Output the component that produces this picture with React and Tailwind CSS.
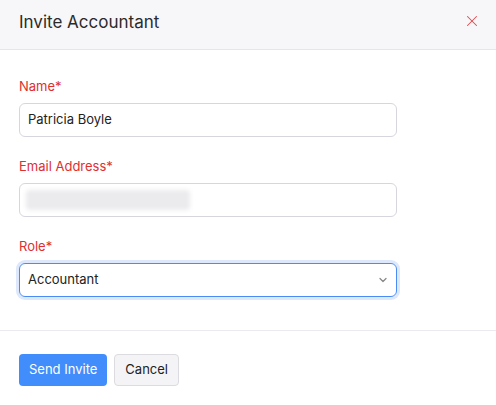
import { ChevronDown, X } from "lucide-react";

function Field({ label, children }) {
  return (
    <div className="flex flex-col">
      <label className="text-[13px] text-[#e02f2f] leading-5 mb-[7px]">{label}*</label>
      {children}
    </div>
  );
}

export default function App() {
  return (
    <div className="w-[496px] h-[405px] bg-white font-['Inter',sans-serif] text-[#222]">
      <div className="h-[50px] bg-[#f7f7f9] border-b border-[#e6e6ea] flex items-center justify-between pl-[19px] pr-[15px]">
        <h2 className="text-[17px] text-[#2b2b2b] -mt-[3px]">Invite Accountant</h2>
        <X className="w-[18px] h-[18px] text-[#e5484d] -mt-[7px]" strokeWidth={1.4} />
      </div>

      <div className="px-[19px] pt-[26px] pb-[33px] flex flex-col gap-[19px] w-[378px] box-content">
        <Field label="Name">
          <div className="h-[34px] border border-[#d6d6de] rounded-md px-[8px] flex items-center text-[13px]">
            Patricia Boyle
          </div>
        </Field>
        <Field label="Email Address">
          <div className="h-[34px] border border-[#d6d6de] rounded-md px-[6px] flex items-center">
            <div className="h-[20px] w-[164px] bg-[#ebebee] rounded-sm blur-[2px]" />
          </div>
        </Field>
        <Field label="Role">
          <div className="h-[34px] border border-[#4a8cf5] rounded-md pl-[8px] pr-[7px] flex items-center justify-between text-[13px] ring-[3px] ring-[#dde8fc]">
            <span>Accountant</span>
            <ChevronDown className="w-[12px] h-[12px] text-[#888]" strokeWidth={2.5} />
          </div>
        </Field>
      </div>

      <div className="border-t border-[#ebebef] px-[19px] pt-[23px] flex gap-[7px]">
        <button className="h-[32px] px-[10px] bg-[#408dfb] text-white text-[13px] rounded-[4px]">Send Invite</button>
        <button className="h-[32px] px-[10px] bg-[#f4f4f6] border border-[#dcdce0] text-[#222] text-[13px] rounded-[4px]">Cancel</button>
      </div>
    </div>
  );
}
